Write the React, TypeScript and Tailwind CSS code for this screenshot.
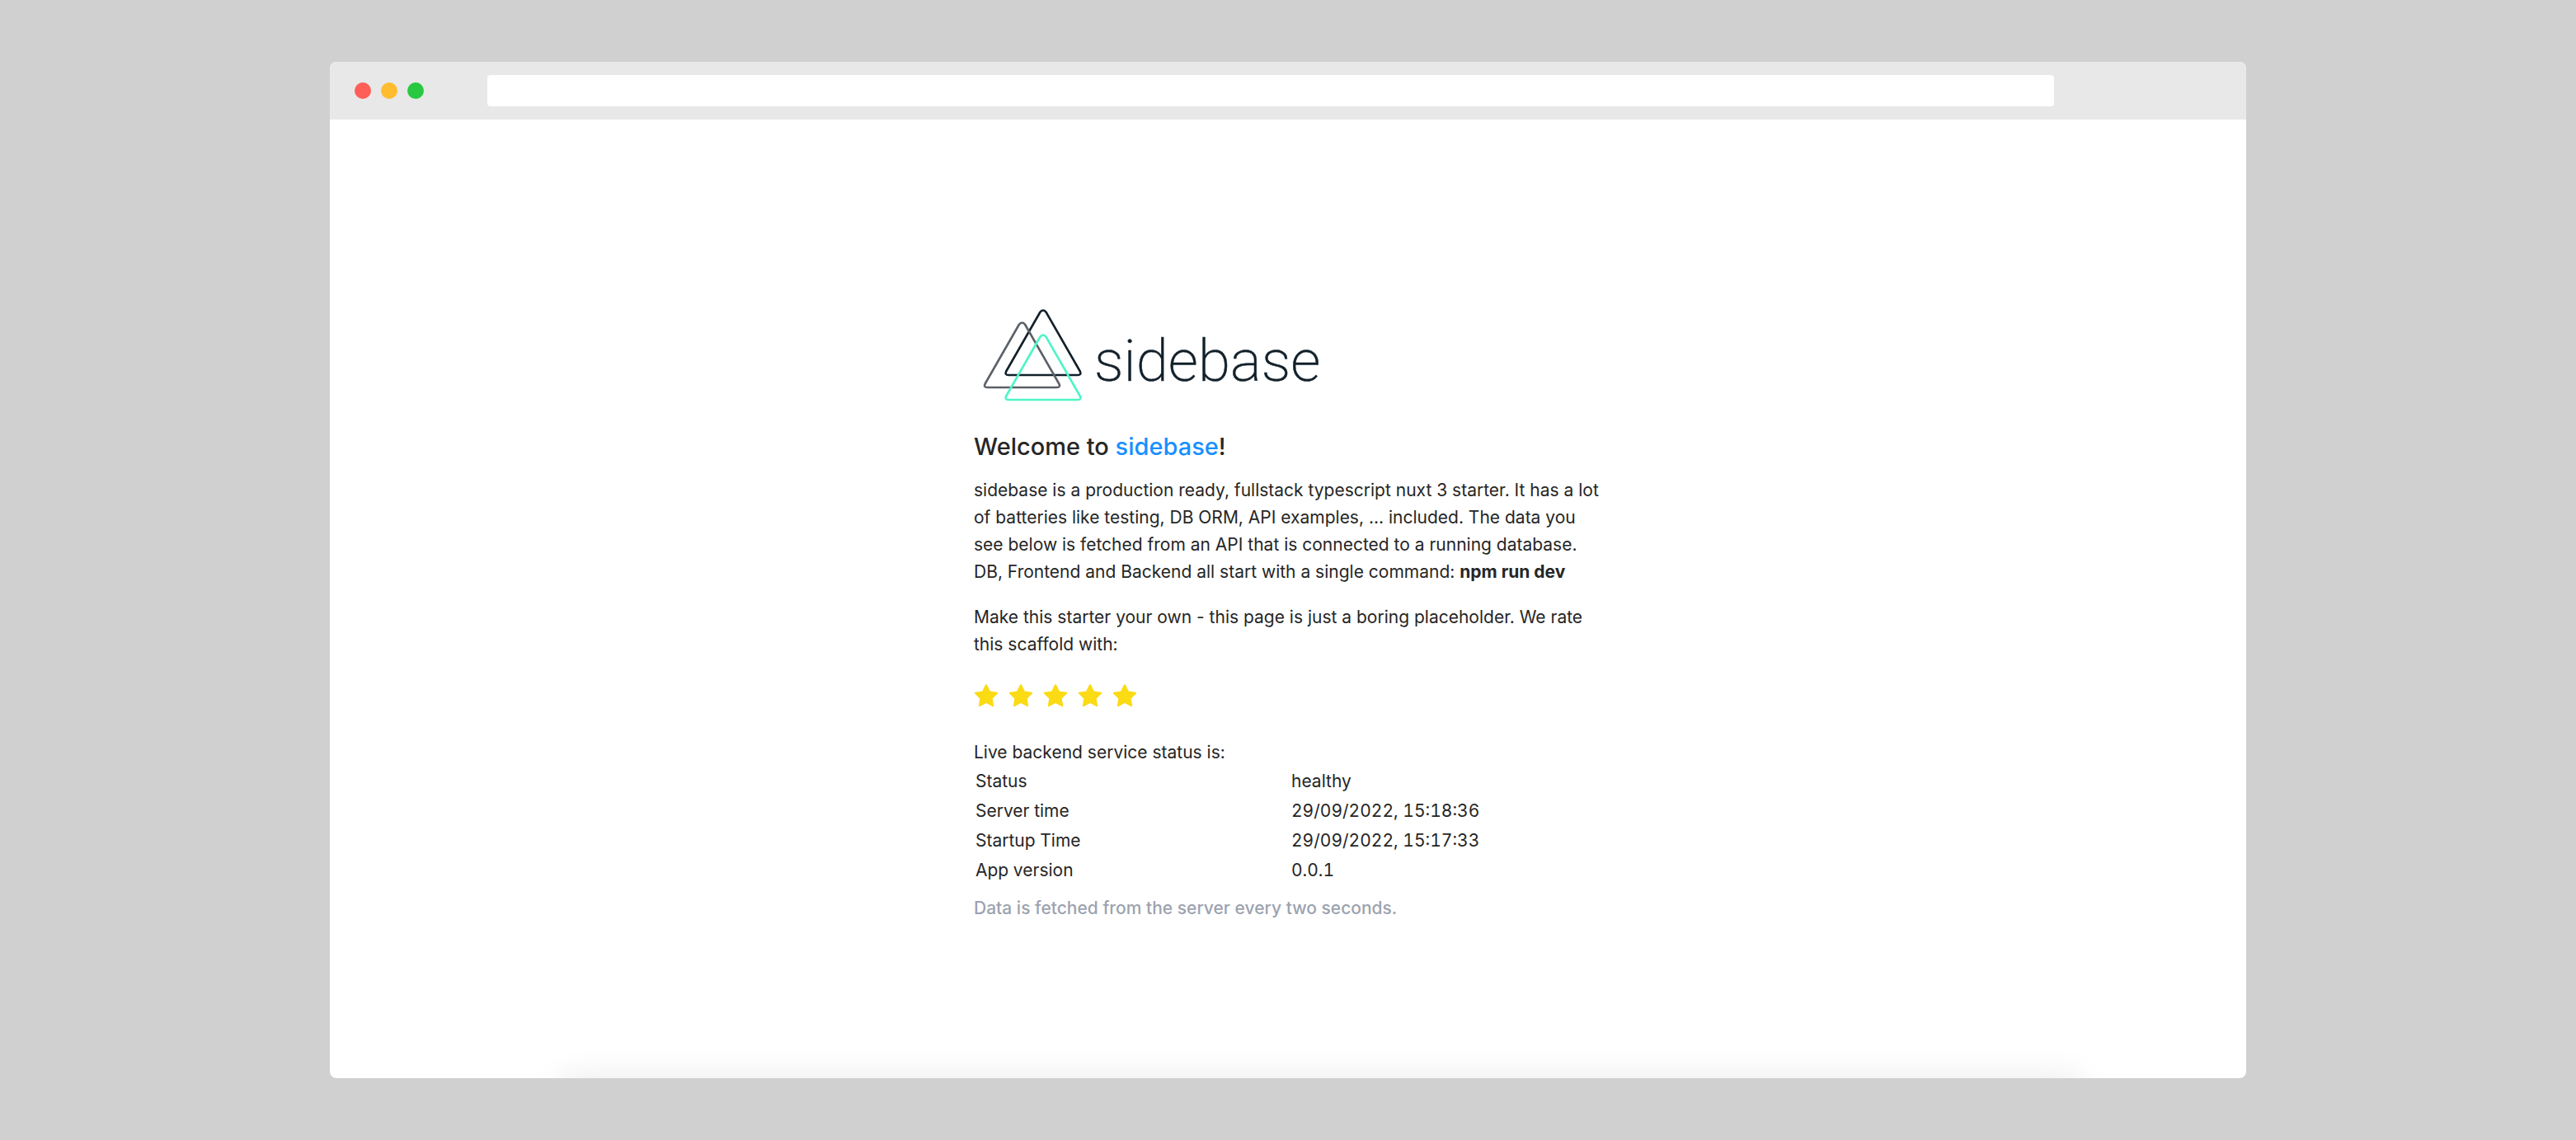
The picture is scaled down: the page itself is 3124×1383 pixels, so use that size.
const stars = [1, 2, 3, 4, 5];

const status = [
  ["Status", "healthy"],
  ["Server time", "29/09/2022, 15:18:36"],
  ["Startup Time", "29/09/2022, 15:17:33"],
  ["App version", "0.0.1"],
];

function Star() {
  return (
    <svg viewBox="64 64 896 896" className="size-[30px]" fill="#fadb14" aria-hidden="true">
      <path d="M908.1 353.1l-253.9-36.9L540.7 86.1c-3.1-6.3-8.2-11.4-14.5-14.5-15.8-7.8-35-1.3-42.9 14.5L369.8 316.2l-253.9 36.9c-7 1-13.4 4.3-18.3 9.3a32.05 32.05 0 00.6 45.3l183.7 179.1-43.4 252.9a31.95 31.95 0 0046.4 33.7L512 754l227.1 119.4c6.2 3.3 13.4 4.4 20.3 3.2 17.4-3 29.1-19.5 26.1-36.9l-43.4-252.9 183.7-179.1c5-4.9 8.3-11.3 9.3-18.3 2.7-17.5-9.5-33.7-27-36.3z" />
    </svg>
  );
}

function Logo() {
  return (
    <svg viewBox="11 0 450 140" className="h-[140px] w-[450px]" role="img" aria-label="sidebase">
      <g fill="none" strokeWidth="2.6" strokeLinejoin="round">
        <path stroke="#12202a" d="M91.5 18.5 L50.2 90.5 Q48.3 95 53 95 H137 Q141.7 95 139.8 90.5 L98.5 18.5 Q95 14.5 91.5 18.5 Z" />
        <path stroke="#5c6168" d="M66 33.5 L24.7 105.5 Q22.5 110 27.5 110 H111.5 Q116.5 110 114.3 105.5 L73 33.5 Q69.5 29.5 66 33.5 Z" />
        <path stroke="#4ef5c6" d="M91.5 48.5 L50.2 120.5 Q48.3 125 53 125 H137 Q141.7 125 139.8 120.5 L98.5 48.5 Q95 44.5 91.5 48.5 Z" />
      </g>
      <text x="157" y="102" fontSize="71" fontWeight="200" fill="#12202a" stroke="#12202a" strokeWidth="0.5" fontFamily="Roboto, sans-serif">sidebase</text>
    </svg>
  );
}

export default function App() {
  return (
    <div className="flex min-h-screen justify-center bg-[#d0d0d0] px-8 py-[75px] font-[Inter,sans-serif]">
      <div className="relative flex w-full max-w-[2324px] flex-col overflow-hidden rounded-lg bg-white">
        <header className="flex h-[70px] shrink-0 items-center bg-[#e8e8e8] pr-[233px] pl-[30px]">
          <div className="flex gap-3">
            <button aria-label="Close" className="size-5 rounded-full bg-[#ff5f57]" />
            <button aria-label="Minimize" className="size-5 rounded-full bg-[#febc2e]" />
            <button aria-label="Zoom" className="size-5 rounded-full bg-[#28c840]" />
          </div>
          <input aria-label="Address" className="ml-[77px] h-[38px] min-w-0 flex-1 rounded bg-white px-3 outline-none" />
        </header>
        <main className="mx-auto w-full max-w-[762px] pt-[215px] pb-20 text-[21px] leading-[33px] text-[#262626]">
          <Logo />
          <h1 className="mt-[22px] text-[29px] leading-10 font-medium">
            Welcome to{" "}
            <a href="#sidebase" className="text-[#1890ff]">sidebase</a>!
          </h1>
          <p className="mt-4">
            sidebase is a production ready, fullstack typescript nuxt 3 starter. It has a lot of batteries like
            testing, DB ORM, API examples, ... included. The data you see below is fetched from an API that is
            connected to a running database. DB, Frontend and Backend all start with a single command:{" "}
            <strong className="font-bold">npm run dev</strong>
          </p>
          <p className="mt-[22px]">
            Make this starter your own - this page is just a boring placeholder. We rate this scaffold with:
          </p>
          <div className="mt-8 flex gap-3" role="img" aria-label="5 stars">
            {stars.map((n) => (
              <Star key={n} />
            ))}
          </div>
          <p className="mt-9">Live backend service status is:</p>
          <table className="w-full table-fixed border-collapse tabular-nums">
            <tbody>
              {status.map(([name, value]) => (
                <tr key={name} className="h-9">
                  <th scope="row" className="w-[385px] pl-0.5 text-left font-normal">{name}</th>
                  <td>{value}</td>
                </tr>
              ))}
            </tbody>
          </table>
          <p className="mt-3 font-medium text-[#9ca3af]">Data is fetched from the server every two seconds.</p>
        </main>
        <div className="absolute top-full right-[200px] left-[280px] h-10 shadow-[0_0_40px_rgba(0,0,0,0.09)]" />
      </div>
    </div>
  );
}
